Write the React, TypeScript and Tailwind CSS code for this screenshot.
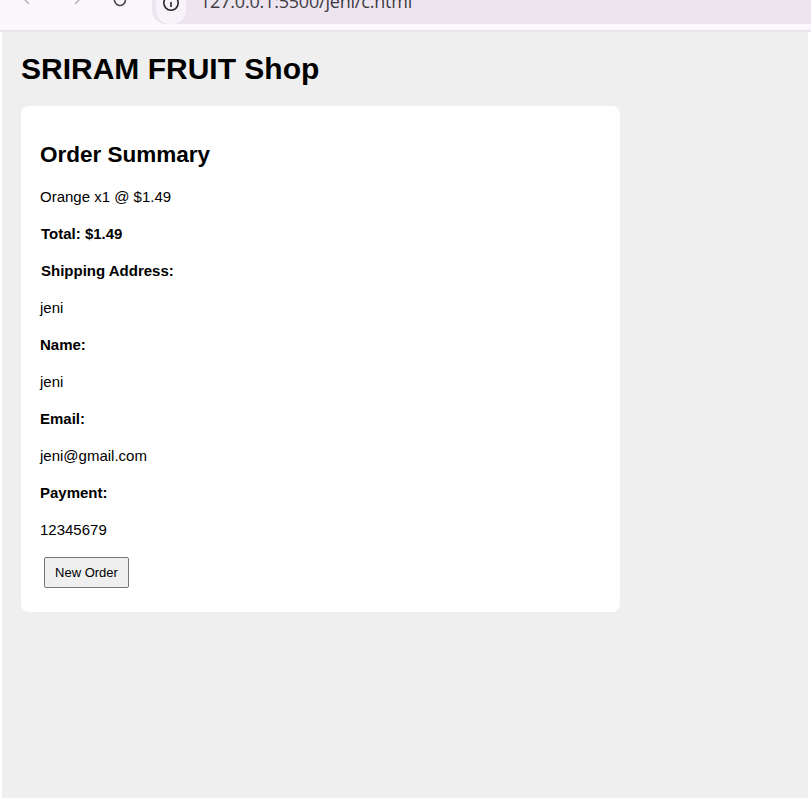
import React from "react";

function Chrome() {
  return (
    <div className="h-[32px] bg-[#fcf7fd] flex items-start overflow-hidden border-b-[2px] border-[#ebe3ed]">
      <div className="flex items-start w-[152px] shrink-0">
        <svg width="16" height="16" viewBox="0 0 16 16" className="ml-[22px] mt-[-9px]" fill="none" stroke="#b8b3ba" strokeWidth="1.5">
          <path d="M14 8H2M7 3L2 8l5 5" />
        </svg>
        <svg width="16" height="16" viewBox="0 0 16 16" className="ml-[28px] mt-[-9px]" fill="none" stroke="#b8b3ba" strokeWidth="1.5">
          <path d="M2 8h12M9 3l5 5-5 5" />
        </svg>
        <svg width="16" height="16" viewBox="0 0 16 16" className="ml-[30px] mt-[-8px]" fill="none" stroke="#4a454c" strokeWidth="1.6">
          <path d="M13.5 8a5.5 5.5 0 1 1-1.6-3.9" />
        </svg>
      </div>
      <div className="flex-1 h-[24px] bg-[#ece5ef] rounded-bl-[14px] flex items-start">
        <div className="w-[30px] h-[24px] rounded-bl-[14px] rounded-br-[14px] bg-[#f8f3f9] flex justify-center ml-[4px]">
          <svg width="18" height="18" viewBox="0 0 18 18" className="mt-[-6px]" fill="none" stroke="#29262b" strokeWidth="1.6">
            <circle cx="9" cy="9" r="7.2" />
            <path d="M9 8v5M9 5.2v0.8" />
          </svg>
        </div>
        <span className="ml-[14px] mt-[-9px] text-[18px] leading-[20px] text-[#3f3b42] font-['Open_Sans',sans-serif] tracking-[-0.2px]">
          127.0.0.1:5500/jeni/c.html
        </span>
      </div>
    </div>
  );
}

export default function App() {
  const rows: { text: string; bold?: boolean; indent?: boolean }[] = [
    { text: "Orange x1 @ $1.49" },
    { text: "Total: $1.49", bold: true, indent: true },
    { text: "Shipping Address:", bold: true, indent: true },
    { text: "jeni" },
    { text: "Name:", bold: true },
    { text: "jeni" },
    { text: "Email:", bold: true },
    { text: "jeni@gmail.com" },
    { text: "Payment:", bold: true },
    { text: "12345679" },
  ];
  return (
    <div className="w-[811px] h-[800px] bg-white font-['Liberation_Sans',Arial,sans-serif] text-black">
      <Chrome />
      <div className="mx-[2px] mr-[3px] h-[766px] bg-[#efefef] pl-[19px] pt-[20px]">
        <h1 className="text-[30px] leading-[34px] font-bold">SRIRAM FRUIT Shop</h1>
        <div className="mt-[20px] w-[599px] bg-white rounded-[8px] pl-[19px] pt-[36px] pb-[24px]">
          <h2 className="text-[22.5px] leading-[26px] font-bold">Order Summary</h2>
          <div className="mt-[20px] flex flex-col gap-[20px]">
            {rows.map((r, i) => (
              <div
                key={i}
                className={`text-[15px] leading-[17px] ${r.bold ? "font-bold" : ""} ${r.indent ? "pl-[1px]" : ""}`}
              >
                {r.text}
              </div>
            ))}
          </div>
          <div className="mt-[19px] pl-[4px]">
            <button className="h-[31px] w-[85px] bg-[#efefef] border border-[#767676] text-[13px] text-black rounded-[2px]">
              New Order
            </button>
          </div>
        </div>
      </div>
    </div>
  );
}
